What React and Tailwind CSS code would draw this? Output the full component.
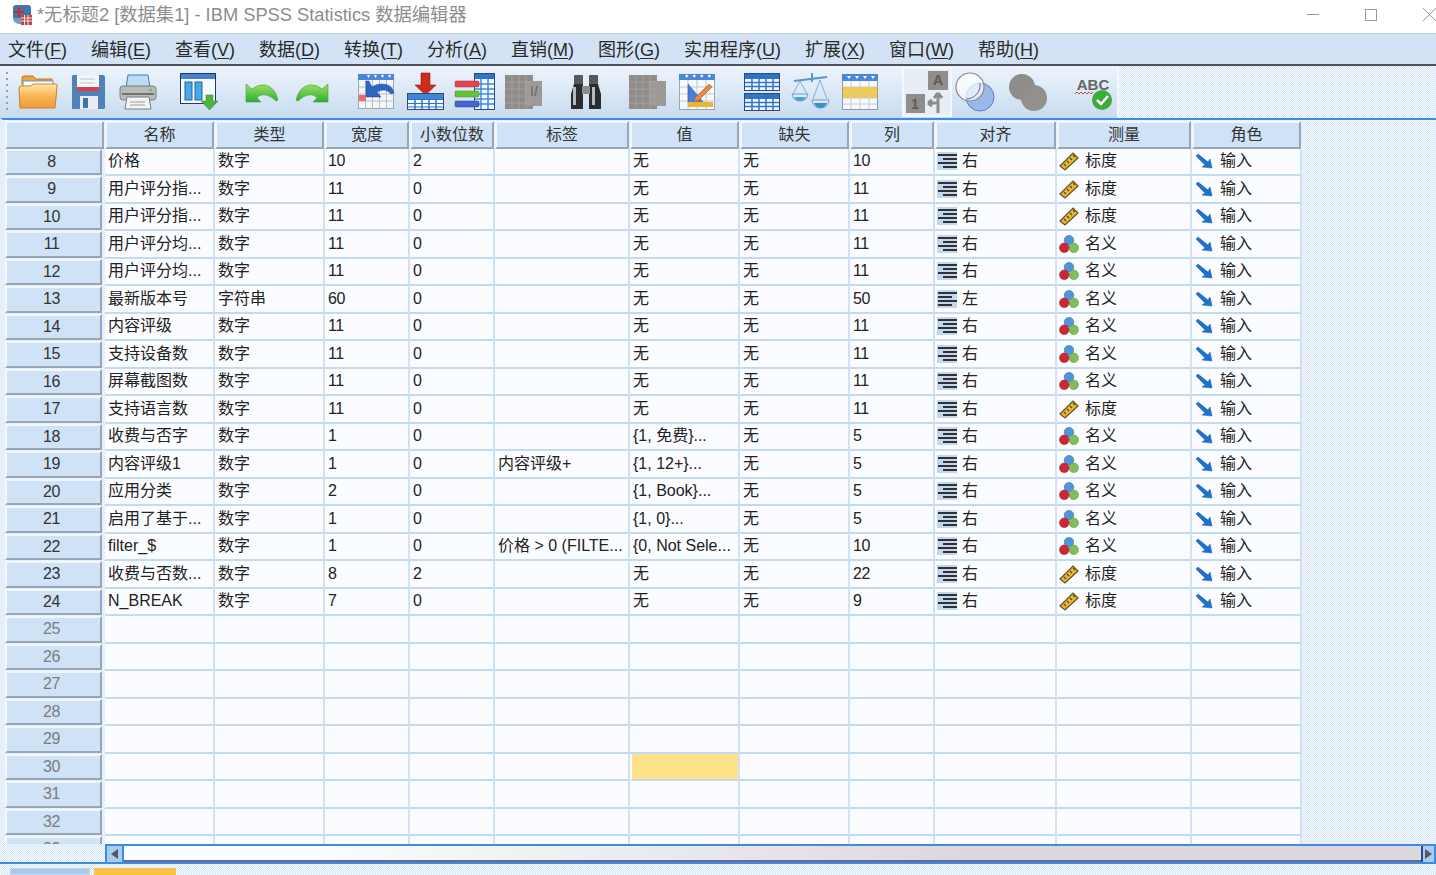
// SPSS variable view
const menus = [
  ['文件', 'F'], ['编辑', 'E'], ['查看', 'V'], ['数据', 'D'], ['转换', 'T'], ['分析', 'A'],
  ['直销', 'M'], ['图形', 'G'], ['实用程序', 'U'], ['扩展', 'X'], ['窗口', 'W'], ['帮助', 'H'],
]

const headers = ['名称', '类型', '宽度', '小数位数', '标签', '值', '缺失', '列', '对齐', '测量', '角色']

const S = 'scale'
const N = 'nominal'
const rows = [
  [8, '价格', '数字', '10', '2', '', '无', '10', 'r', S],
  [9, '用户评分指...', '数字', '11', '0', '', '无', '11', 'r', S],
  [10, '用户评分指...', '数字', '11', '0', '', '无', '11', 'r', S],
  [11, '用户评分均...', '数字', '11', '0', '', '无', '11', 'r', N],
  [12, '用户评分均...', '数字', '11', '0', '', '无', '11', 'r', N],
  [13, '最新版本号', '字符串', '60', '0', '', '无', '50', 'l', N],
  [14, '内容评级', '数字', '11', '0', '', '无', '11', 'r', N],
  [15, '支持设备数', '数字', '11', '0', '', '无', '11', 'r', N],
  [16, '屏幕截图数', '数字', '11', '0', '', '无', '11', 'r', N],
  [17, '支持语言数', '数字', '11', '0', '', '无', '11', 'r', S],
  [18, '收费与否字', '数字', '1', '0', '', '{1, 免费}...', '5', 'r', N],
  [19, '内容评级1', '数字', '1', '0', '内容评级+', '{1, 12+}...', '5', 'r', N],
  [20, '应用分类', '数字', '2', '0', '', '{1, Book}...', '5', 'r', N],
  [21, '启用了基于...', '数字', '1', '0', '', '{1, 0}...', '5', 'r', N],
  [22, 'filter_$', '数字', '1', '0', '价格 > 0 (FILTE...', '{0, Not Sele...', '10', 'r', N],
  [23, '收费与否数...', '数字', '8', '2', '', '无', '22', 'r', S],
  [24, 'N_BREAK', '数字', '7', '0', '', '无', '9', 'r', S],
]
const emptyRows = [25, 26, 27, 28, 29, 30, 31, 32, 33]

const gridCols = 'grid grid-cols-[100px_110px_110px_85px_85px_135px_110px_110px_85px_122px_135px_110px]'
const dither = 'bg-[repeating-conic-gradient(#cfe2f7_0%_25%,#fbfdff_0%_50%)] bg-size-[2px_2px]'
const cellBase = 'flex items-center min-w-0 overflow-hidden whitespace-nowrap border-r-2 border-r-[#d2e2f5] border-b-2 border-b-[#c4daf0] text-[#222] text-[16px]'
const cell = `${cellBase} bg-[#fbfcff] pl-[3px]`

function AppIcon() {
  return (
    <svg width="24" height="24" viewBox="0 0 24 24" className="shrink-0">
      <path d="M3 5q0-3 3-3h12q3 0 3 3v10H3z" fill="#3f78a8" />
      <path d="M8 4h2v4h4v2h-4v4H8v-4H4V8h4z" fill="#d3242c" />
      <rect x="11" y="12" width="11" height="10" fill="#c2423f" />
      <path d="M11 15h11M11 18h11M14.500 12v10M18 12v10" stroke="#f2e4e0" />
      <path d="M3 15h8v6q-8 0-8-6z" fill="#6d9cc4" />
    </svg>
  )
}

function Folder() {
  return (
    <svg width="40" height="40" viewBox="0 0 40 40" className="shrink-0">
      <defs>
        <linearGradient id="fold" x1="0" y1="0" x2="0" y2="1">
          <stop offset="0" stopColor="#fde9a8" />
          <stop offset="0.5" stopColor="#fbb554" />
          <stop offset="1" stopColor="#f0993a" />
        </linearGradient>
      </defs>
      <path d="M4 12V6q0-2 2-2h9l3 3h16v6z" fill="#e9a53f" stroke="#b9792b" />
      <rect x="5" y="9" width="30" height="8" fill="#ffffff" stroke="#6f94c4" />
      <path d="M2 36 1 16q0-2 2-2h10l2-2h23q2 0 1 3l-2 21z" fill="url(#fold)" stroke="#c8812d" />
    </svg>
  )
}

function Save() {
  return (
    <svg width="40" height="40" viewBox="0 0 40 40" className="shrink-0">
      <path d="M5 3h30q2 0 2 2v31q0 1-2 1H5q-1 0-1-1V5q0-2 1-2z" fill="#4f82b6" />
      <rect x="9" y="3" width="22" height="16" fill="#f4f6f8" />
      <rect x="9" y="15" width="22" height="4" fill="#d8404e" />
      <path d="M12 7h15M12 11h15" stroke="#b9c4d0" />
      <rect x="12" y="24" width="18" height="13" fill="#e9edf1" />
      <rect x="15" y="26" width="5" height="10" fill="#3f74a8" />
    </svg>
  )
}

function Printer() {
  return (
    <svg width="40" height="40" viewBox="0 0 40 40" className="shrink-0">
      <path d="M10 3h20l2 13H8z" fill="#bcdcf4" stroke="#3d7fb8" />
      <rect x="2" y="14" width="36" height="14" rx="3" fill="#b9bbb8" stroke="#7c7f7e" />
      <rect x="4" y="21" width="32" height="2" fill="#6f7271" />
      <rect x="31" y="17" width="3" height="2" fill="#55c24a" />
      <path d="M9 25h22l2 12H7z" fill="#f2f3f3" stroke="#7c7f7e" />
      <path d="M12 30h15M12 33h15" stroke="#9c9f9f" />
    </svg>
  )
}

function VarWindow() {
  return (
    <svg width="40" height="40" viewBox="0 0 40 40" className="shrink-0">
      <rect x="1.500" y="1.500" width="35" height="30" fill="#f7fafd" stroke="#27356f" />
      <rect x="2" y="2" width="34" height="5" fill="#4a7fd0" />
      <rect x="6" y="10" width="7" height="18" fill="#49a9e6" stroke="#2165a8" />
      <rect x="16" y="10" width="7" height="18" fill="#49a9e6" stroke="#2165a8" />
      <path d="M27 23h7v6h5l-8.500 9L22 29h5z" fill="#4fb53a" stroke="#2f8a24" strokeWidth="0.500" />
    </svg>
  )
}

function Undo({ flip }) {
  return (
    <svg width="40" height="40" viewBox="0 0 40 40" className={flip ? 'shrink-0 -scale-x-100' : 'shrink-0'}>
      <defs>
        <linearGradient id={flip ? 'redoG' : 'undoG'} x1="0" y1="0" x2="0" y2="1">
          <stop offset="0" stopColor="#9be25e" />
          <stop offset="1" stopColor="#2eae35" />
        </linearGradient>
      </defs>
      <path d="M5 12v18h15l-4-4q3-4 9-3 5 1 10 6l2-1q-3-13-13-15-7-1-13 4z" fill={`url(#${flip ? 'redoG' : 'undoG'})`} stroke="#4b9a3a" strokeWidth="0.600" />
    </svg>
  )
}

function TableHead({ x, y, n, cw }) {
  return Array.from({ length: n }).map((_, i) => (
    <path key={i} d={`M${x + i * cw + 2} ${y + 1}h${cw - 4}l-${(cw - 4) / 2} 3z`} fill="#ffffff" />
  ))
}

function GotoCase() {
  return (
    <svg width="40" height="40" viewBox="0 0 40 40" className="shrink-0">
      <rect x="2.500" y="2.500" width="35" height="34" fill="#f4f6f8" stroke="#9aa5b0" />
      <rect x="2" y="2" width="36" height="6" fill="#4d86d6" />
      <TableHead x={9} y={2} n={4} cw={7} />
      <path d="M2.500 15h35M2.500 22h35M2.500 29h35M9.500 8v29M16.500 8v29M23.500 8v29M30.500 8v29" stroke="#b7bfc8" />
      <rect x="3" y="23" width="7" height="6" fill="#ee6a78" />
      <path d="M10 9v16h15l-4-5q8-5 14 2l3-1q-2-9-12-9-6 0-10 3l-3-6z" fill="#2f66c4" stroke="#1d4a9a" strokeWidth="0.500" />
    </svg>
  )
}

function InsertCase() {
  return (
    <svg width="40" height="40" viewBox="0 0 40 40" className="shrink-0">
      <path d="M15 1h9v12h6L19.500 23 9 13h6z" fill="#cf2a1e" stroke="#932018" strokeWidth="0.600" />
      <rect x="1.500" y="21.500" width="36" height="16" fill="#f7fbff" stroke="#2d4a86" />
      <rect x="2" y="22" width="35" height="5" fill="#3f86d8" />
      <path d="M2 27.500h35M2 31.500h35M2 35h35" stroke="#2e74c8" strokeWidth="1" />
      <path d="M9 27v10M16 27v10M23 27v10M30 27v10" stroke="#2e74c8" strokeWidth="1.500" />
    </svg>
  )
}

function InsertVar() {
  return (
    <svg width="42" height="40" viewBox="0 0 42 40" className="shrink-0">
      <rect x="20.500" y="1.500" width="20" height="36" fill="#f7fbff" stroke="#2d4a86" />
      <rect x="21" y="2" width="19" height="5" fill="#2e74c8" />
      <path d="M21 12h19M21 17h19M21 22h19M21 27h19M21 32h19M27 7v30M34 7v30" stroke="#3a8ae0" strokeWidth="1.500" />
      <rect x="1" y="9" width="24" height="6" rx="1" fill="#e4444f" stroke="#a83640" strokeWidth="0.500" />
      <rect x="1" y="19" width="24" height="6" rx="1" fill="#62c338" stroke="#3e8e26" strokeWidth="0.500" />
      <rect x="1" y="29" width="24" height="6" rx="1" fill="#4567cf" stroke="#2c4596" strokeWidth="0.500" />
    </svg>
  )
}

function GrayGrid({ mark }) {
  return (
    <svg width="40" height="40" viewBox="0 0 40 40" className="shrink-0">
      <rect x="2" y="3" width="28" height="34" fill="#8f8c89" />
      <rect x="22" y="9" width="17" height="25" fill="#9c9996" />
      <path d="M2 10h28M2 17h28M2 24h28M2 31h28M9 3v34M16 3v34M23 3v34" stroke="#a8a5a2" strokeWidth="0.800" />
      {mark && <path d="M29 14v10M34 14l-2 10" stroke="#6f6c69" strokeWidth="1.500" fill="none" />}
    </svg>
  )
}

function Binoculars() {
  return (
    <svg width="40" height="40" viewBox="0 0 40 40" className="shrink-0">
      <rect x="8" y="3" width="9" height="10" rx="1" fill="#55595c" />
      <rect x="23" y="3" width="9" height="10" rx="1" fill="#55595c" />
      <path d="M8 12h9v25H5V22z" fill="#2b2c2e" />
      <path d="M23 12h9l3 10v15H23z" fill="#2b2c2e" />
      <rect x="16" y="14" width="8" height="8" fill="#8a8d90" />
      <rect x="7" y="15" width="3" height="18" fill="#b7babc" />
      <rect x="26" y="15" width="3" height="18" fill="#b7babc" />
    </svg>
  )
}

function EditTable() {
  return (
    <svg width="40" height="40" viewBox="0 0 40 40" className="shrink-0">
      <rect x="2.500" y="2.500" width="35" height="35" fill="#f7f9fb" stroke="#9aa5b0" />
      <rect x="2" y="2" width="36" height="6" fill="#4d86d6" />
      <TableHead x={6} y={2} n={4} cw={7.500} />
      <path d="M2.500 15h35M2.500 22h35M2.500 29h35M11 8v29M20 8v29M29 8v29" stroke="#c2c9d0" />
      <path d="M11 12v19h16z" fill="#4a7cd8" stroke="#2b4fa0" strokeWidth="0.500" />
      <rect x="11" y="30" width="25" height="5" fill="#e9b636" />
      <path d="M18 26 32 12l3 3-14 14-4 1z" fill="#e98a3c" stroke="#a85a20" strokeWidth="0.600" />
    </svg>
  )
}

function SplitTable() {
  const block = (y) => (
    <g key={y}>
      <rect x="2.500" y={y + 0.500} width="35" height="17" fill="#f7fbff" stroke="#2d4a86" />
      <rect x="3" y={y + 1} width="34" height="5" fill="#2e74c8" />
      <path d={`M3 ${y + 9.500}h34M3 ${y + 13.500}h34M10 ${y + 6}v11M17 ${y + 6}v11M24 ${y + 6}v11M31 ${y + 6}v11`} stroke="#2e74c8" strokeWidth="1.500" />
    </g>
  )
  return (
    <svg width="40" height="40" viewBox="0 0 40 40" className="shrink-0">
      {block(1)}
      {block(21)}
    </svg>
  )
}

function Scale() {
  return (
    <svg width="40" height="40" viewBox="0 0 40 40" className="shrink-0">
      <path d="M3 9 36 5M21 1v9" stroke="#5c94c8" strokeWidth="2" fill="none" />
      <path d="M9 9 2 22M9 9l7 13M29 8l-7 19M29 8l7 19" stroke="#6ea0cc" strokeWidth="0.800" fill="none" />
      <path d="M1 22h16q-1 7-8 7t-8-7z" fill="#dbeaf5" stroke="#6ea0cc" />
      <path d="M3 25h12q-2 4-6 4t-6-4z" fill="#4ea0d4" />
      <path d="M21 28h17q-1 8-8.500 8T21 28z" fill="#dbeaf5" stroke="#6ea0cc" />
      <path d="M23 31h13q-2 5-6.500 5T23 31z" fill="#3a90cc" />
    </svg>
  )
}

function YellowTable() {
  return (
    <svg width="40" height="40" viewBox="0 0 40 40" className="shrink-0">
      <rect x="2.500" y="2.500" width="35" height="35" fill="#f7f9fb" stroke="#8d99a6" />
      <rect x="2" y="2" width="36" height="7" fill="#4d86d6" />
      <TableHead x={5} y={3} n={4} cw={8} />
      <rect x="3" y="15" width="34" height="11" fill="#fbc935" />
      <path d="M2.500 15h35M2.500 20.500h35M2.500 26h35M2.500 32h35M11 9v28M20 9v28M29 9v28" stroke="#c6ccd2" />
    </svg>
  )
}

function Crosstab() {
  return (
    <div className="flex items-center justify-center w-[50px] h-[50px] shrink-0 bg-[#e6eef8] border-2 border-[#f4f8fc] ml-[22px]">
      <svg width="46" height="46" viewBox="0 0 46 46">
        <rect x="24" y="2" width="20" height="19" fill="#908d8a" />
        <rect x="2" y="25" width="19" height="19" fill="#908d8a" />
        <text x="34" y="16" fontSize="14" fontWeight="700" textAnchor="middle" fill="#5e5b59" fontFamily="Liberation Sans">A</text>
        <text x="11" y="40" fontSize="14" fontWeight="700" textAnchor="middle" fill="#5e5b59" fontFamily="Liberation Sans">1</text>
        <path d="M34 44V24M34 24l-4 5M34 24l4 5M34 34H24M24 34l4-3M24 34l4 3" stroke="#8f8c89" strokeWidth="3" fill="none" />
      </svg>
    </div>
  )
}

function Venn() {
  return (
    <svg width="40" height="40" viewBox="0 0 40 40" className="shrink-0">
      <circle cx="25" cy="25" r="14" fill="#9ab8ea" stroke="#5f7fc0" />
      <circle cx="15" cy="15" r="14" fill="#ffffff" fillOpacity="0.700" stroke="#8b8a88" strokeWidth="1.200" />
      <path d="M25 11a14 14 0 0 1-14 16" fill="none" stroke="#5f6f90" />
    </svg>
  )
}

function GrayCircles() {
  return (
    <svg width="40" height="40" viewBox="0 0 40 40" className="shrink-0">
      <circle cx="14" cy="15" r="13" fill="#8f8c89" />
      <circle cx="26" cy="26" r="13" fill="#938f8c" />
    </svg>
  )
}

function Spell() {
  return (
    <svg width="40" height="40" viewBox="0 0 40 40" className="shrink-0">
      <text x="20" y="18" fontSize="15" fontWeight="700" textAnchor="middle" fill="#666" fontFamily="Liberation Sans">ABC</text>
      <path d="M2 22l2-2 2 2 2-2 2 2 2-2 2 2 2-2 2 2 2-2" stroke="#d34a3c" strokeWidth="1" fill="none" />
      <circle cx="29" cy="28" r="10" fill="#3cab3e" />
      <path d="M24 28l4 4 7-8" stroke="#ffffff" strokeWidth="2.500" fill="none" />
    </svg>
  )
}

function AlignIcon({ side }) {
  const lines = side === 'l'
    ? ['M1 4h19', 'M1 8h14', 'M1 12h19', 'M1 16h14']
    : ['M1 4h19', 'M6 8h14', 'M1 12h19', 'M6 16h14']
  return (
    <svg width="22" height="20" viewBox="0 0 22 20" className="shrink-0">
      <rect x="0" y="1" width="20" height="18" fill="#c3d8ee" />
      {lines.map(d => <path key={d} d={d} stroke="#2f3237" strokeWidth="2" />)}
    </svg>
  )
}

function RulerIcon() {
  return (
    <svg width="20" height="20" viewBox="0 0 20 20" className="shrink-0">
      <path d="M1 15 14 2l5 5L6 19z" fill="#eab52f" stroke="#5b5232" strokeWidth="1.200" />
      <path d="M5 13l2 2M8 10l2 2M11 7l2 2M14 4l2 2" stroke="#5b4a18" strokeWidth="1.200" />
    </svg>
  )
}

function NominalIcon() {
  return (
    <svg width="20" height="20" viewBox="0 0 21 20" className="shrink-0">
      <circle cx="10.500" cy="6" r="5" fill="#4f94dc" stroke="#3470b0" strokeWidth="0.600" />
      <circle cx="15.500" cy="14" r="5" fill="#82bd5c" stroke="#5b9a3c" strokeWidth="0.600" />
      <circle cx="5.500" cy="14" r="5" fill="#cf2636" stroke="#9c1c28" strokeWidth="0.600" />
    </svg>
  )
}

function InputIcon() {
  return (
    <svg width="18" height="16" viewBox="0 0 18 16" className="shrink-0">
      <path d="M1 3 3 1l10 8 2-3 2 9-10-1 3-2z" fill="#1b72d0" stroke="#125aa8" strokeWidth="0.500" />
    </svg>
  )
}

function HeadCell({ children }) {
  return (
    <div className="flex items-center justify-center bg-[#cfe2f6] border-2 border-t-[#f2f7fc] border-l-[#f2f7fc] border-r-[#97a6b6] border-b-[#97a6b6] text-[#333] text-[16px] mr-px">
      {children}
    </div>
  )
}

function RowHead({ n, dim }) {
  return (
    <div className={`flex items-center justify-center pr-[4px] mr-[3px] mb-px bg-[#cfe2f6] border-2 border-t-[#f2f7fc] border-l-[#f2f7fc] border-r-[#97a6b6] border-b-[#97a6b6] text-[16px] tracking-[-0.5px] ${dim ? 'text-[#7c7c7c]' : 'text-[#333]'}`}>
      {n}
    </div>
  )
}

function VarRow({ row }) {
  const [n, name, type, width, dec, label, value, col, align, measure] = row
  return (
    <>
      <RowHead n={n} />
      <div className={cell}>{name}</div>
      <div className={cell}>{type}</div>
      <div className={`${cell} tracking-[-0.5px]`}>{width}</div>
      <div className={cell}>{dec}</div>
      <div className={cell}>{label}</div>
      <div className={cell}>{value}</div>
      <div className={cell}>无</div>
      <div className={`${cell} tracking-[-0.5px]`}>{col}</div>
      <div className={`${cellBase} bg-[#fbfcff] gap-[3px] pl-[2px]`}>
        <AlignIcon side={align} />
        {align === 'l' ? '左' : '右'}
      </div>
      <div className={`${cellBase} bg-[#fbfcff] gap-[6px] pl-[2px]`}>
        {measure === 'scale' ? <RulerIcon /> : <NominalIcon />}
        {measure === 'scale' ? '标度' : '名义'}
      </div>
      <div className={`${cellBase} bg-[#fbfcff] gap-[7px] pl-[3px]`}>
        <InputIcon />
        输入
      </div>
    </>
  )
}

function EmptyRow({ n }) {
  return (
    <>
      <RowHead n={n} dim />
      {headers.map((h, i) => (
        <div key={h} className={n === 30 && i === 5 ? `${cellBase} bg-[#fee28a] border-l-2 border-l-[#fbfcff]` : cell} />
      ))}
    </>
  )
}

export default function App() {
  return (
    <div className="flex flex-col w-[1436px] h-[875px] overflow-hidden bg-white font-['Liberation_Sans','Noto_Sans_CJK_SC',sans-serif]">
      <div className="flex items-center h-[33px] shrink-0 pl-[10px] pb-1 bg-white">
        <AppIcon />
        <span className="ml-[3px] text-[18.3px] text-[#8d8d8d] whitespace-nowrap">*无标题2 [数据集1] - IBM SPSS Statistics 数据编辑器</span>
        <div className="flex items-center ml-auto">
          <span className="w-3 h-px bg-[#9a9a9a]" />
          <span className="w-3 h-3 ml-[46px] border border-[#9a9a9a]" />
          <svg width="13" height="13" viewBox="0 0 13 13" className="ml-[46px]">
            <path d="M0 0 13 13M13 0 0 13" stroke="#9a9a9a" />
          </svg>
        </div>
      </div>

      <div className="flex items-center gap-[24px] h-[33px] shrink-0 pl-2 pt-[3px] bg-[#d3e3f5] border-t border-t-[#c2cfde] border-b-2 border-b-[#4d5157] text-[18px] text-[#2a2a2a] whitespace-nowrap">
        {menus.map(([label, key]) => (
          <span key={key}>
            {label}(<span className="underline underline-offset-2">{key}</span>)
          </span>
        ))}
      </div>

      <div className={`flex h-[52px] shrink-0 ${dither}`}>
        <div className="flex items-center w-[1119px] pl-[5px] bg-[linear-gradient(#eef5fcdd,#c3d8eedd)] border-r-2 border-r-[#f4f8fc]">
          <div className="w-[4px] h-[44px] shrink-0 bg-[radial-gradient(#8ea4bc_1px,transparent_1px)] bg-size-[4px_6px]" />
          <div className="ml-[9px]"><Folder /></div>
          <div className="ml-[10px]"><Save /></div>
          <div className="ml-[10px]"><Printer /></div>
          <div className="ml-[21px]"><VarWindow /></div>
          <div className="ml-[22px]"><Undo /></div>
          <div className="ml-[12px]"><Undo flip /></div>
          <div className="ml-[23px]"><GotoCase /></div>
          <div className="ml-[10px]"><InsertCase /></div>
          <div className="ml-[8px]"><InsertVar /></div>
          <div className="ml-[7px]"><GrayGrid mark /></div>
          <div className="ml-[23px]"><Binoculars /></div>
          <div className="ml-[21px]"><GrayGrid /></div>
          <div className="ml-[10px]"><EditTable /></div>
          <div className="ml-[25px]"><SplitTable /></div>
          <div className="ml-[9px]"><Scale /></div>
          <div className="ml-[9px]"><YellowTable /></div>
          <Crosstab />
          <div className="ml-[3px]"><Venn /></div>
          <div className="ml-[13px]"><GrayCircles /></div>
          <div className="ml-[25px]"><Spell /></div>
        </div>
      </div>

      <div className={`flex flex-col flex-1 min-h-0 border-l-[3px] border-l-[#e8eef5] border-t-2 border-t-[#3f8be0] ${dither}`}>
        <div className="flex-1 min-h-0 overflow-hidden pt-px pl-[2px]">
          <div className={`${gridCols} auto-rows-[27.5px] w-fit`}>
            <HeadCell />
            {headers.map(h => <HeadCell key={h}>{h}</HeadCell>)}
            {rows.map(r => <VarRow key={r[0]} row={r} />)}
            {emptyRows.map(n => <EmptyRow key={n} n={n} />)}
          </div>
        </div>
        <div className="flex h-[18px] shrink-0 pl-[102px]">
          <div className="flex flex-1 items-stretch border-2 border-b-0 border-[#3f8be0]">
            <div className="flex items-center justify-center w-[17px] bg-[#a8cdf0] border-r-2 border-r-[#3f8be0]">
              <span className="w-0 h-0 border-y-[5px] border-y-transparent border-r-[7px] border-r-[#55595e]" />
            </div>
            <div className="flex-1 bg-[linear-gradient(to_right,#fbfcff_15%,#dcd9de_65%)] border-b-2 border-b-[#6a6a86]" />
            <div className="flex items-center justify-center w-[13px] bg-[#a8cdf0] border-l-2 border-l-[#27508a]">
              <span className="w-0 h-0 border-y-[5px] border-y-transparent border-l-[7px] border-l-[#55595e]" />
            </div>
          </div>
        </div>
      </div>

      <div className={`flex h-[13px] shrink-0 border-t-2 border-t-[#3f8be0] pt-1 pl-[10px] ${dither}`}>
        <div className="w-[80px] bg-[#a9c9ec] border border-[#c3d8ef]" />
        <div className="w-[82px] ml-[4px] bg-[#f9c244]" />
      </div>
    </div>
  )
}
